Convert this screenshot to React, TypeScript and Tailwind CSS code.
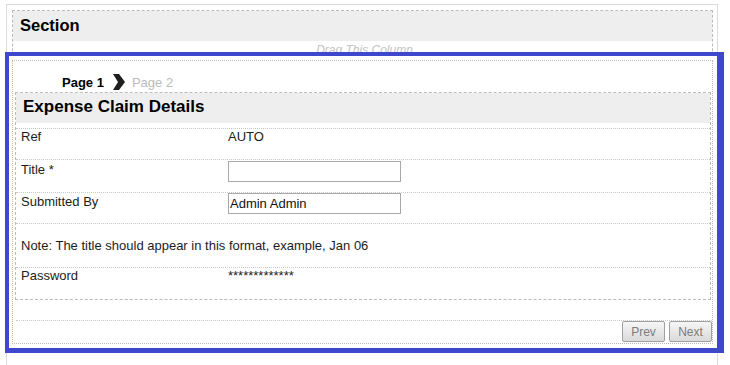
import React from "react";

function Chevron() {
  return (
    <svg width="12" height="16" viewBox="0 0 12 16" className="ml-[9px] -mt-[1px] shrink-0">
      <polygon points="0,0 6,0 12,8 6,16 0,16 5,8" fill="#1e1e1e" />
    </svg>
  );
}

function Row({
  label,
  h,
  pt = "pt-0",
  children,
}: {
  label: string;
  h: string;
  pt?: string;
  children?: React.ReactNode;
}) {
  return (
    <div className={`flex border-t border-dotted border-[#c8c8c8] pl-[5px] ${h}`}>
      <div className={`w-[207px] shrink-0 ${pt}`}>{label}</div>
      <div className="flex-1">{children}</div>
    </div>
  );
}

function TextBox({ value, mt }: { value: string; mt: string }) {
  return (
    <input
      readOnly
      defaultValue={value}
      className={`block ${mt} w-[173px] h-[21px] border border-[#a9a9a9] bg-white px-[1px] text-[13px] leading-[15px] text-[#111] outline-none font-['Liberation_Sans',Arial,sans-serif]`}
    />
  );
}

export default function App() {
  return (
    <div className="w-[730px] h-[365px] overflow-hidden bg-white font-['Liberation_Sans',Arial,sans-serif] text-[13px] leading-[15px] text-[#1c1c1c]">
      <div className="ml-[6px] mt-[4px] w-[712px] h-[400px] border-x border-t border-[#dcdcdc] pt-[5px] pl-[5px] pr-[4px]">
        {/* Section */}
        <div className="border border-dashed border-[#bbbbbb]">
          <div className="h-[30px] bg-[#eeeeee] pl-[7px] pt-[4px] text-[16.5px] leading-[20px] font-bold text-black">
            Section
          </div>
          <div className="h-[14px] overflow-hidden pl-[4px] text-center">
            <div className="mt-[2px] text-[12px] leading-[14px] italic text-[#c4c4c4]">Drag This Column</div>
          </div>
        </div>

        {/* Column */}
        <div className="relative mt-[4px] h-[284px] border border-dotted border-[#bbbbbb]">
          <div className="pointer-events-none absolute -top-[9px] -left-[8px] -right-[12px] -bottom-[10px] z-10 border-t-4 border-l-4 border-r-[7px] border-b-[5px] border-[#3f48cc]" />

          <div className="flex h-[31px] items-start pl-[49px] pt-[14px]">
            <span className="font-bold text-black">Page 1</span>
            <Chevron />
            <span className="ml-[7px] text-[#bbbbbb]">Page 2</span>
          </div>

          <div className="ml-[2px] mr-[1px] border border-dashed border-[#bbbbbb]">
            <div className="h-[30px] bg-[#eeeeee] pl-[7px] pt-[4px] text-[17px] leading-[20px] font-bold text-black">
              Expense Claim Details
            </div>
            <div className="h-[5px]" />
            <Row label="Ref" h="h-[31px]">
              <div>AUTO</div>
            </Row>
            <Row label="Title *" h="h-[33px]" pt="pt-[2px]">
              <TextBox value="" mt="mt-[1px]" />
            </Row>
            <Row label="Submitted By" h="h-[31px]" pt="pt-[1px]">
              <TextBox value="Admin Admin" mt="mt-0" />
            </Row>
            <div className="h-[44px] border-t border-dotted border-[#c8c8c8] pl-[5px] pt-[14px]">
              Note: The title should appear in this format, example, Jan 06
            </div>
            <Row label="Password" h="h-[32px]">
              <div className="text-[13px] leading-[15px]">*************</div>
            </Row>
          </div>

          <div className="h-[20px]" />
          <div className="ml-[3px] border-t border-dotted border-[#c8c8c8]" />
          <div className="flex h-[22px] items-start justify-end gap-[4px]">
            <button className="h-[21px] w-[43px] rounded-[2px] border border-[#a0a0a0] bg-linear-to-b from-[#f6f6f6] to-[#dadada] text-[12px] leading-[14px] text-[#7c7c7c]">
              Prev
            </button>
            <button className="h-[21px] w-[43px] rounded-[2px] border border-[#a0a0a0] bg-linear-to-b from-[#f6f6f6] to-[#dadada] text-[12px] leading-[14px] text-[#7c7c7c]">
              Next
            </button>
          </div>
        </div>
      </div>
    </div>
  );
}
